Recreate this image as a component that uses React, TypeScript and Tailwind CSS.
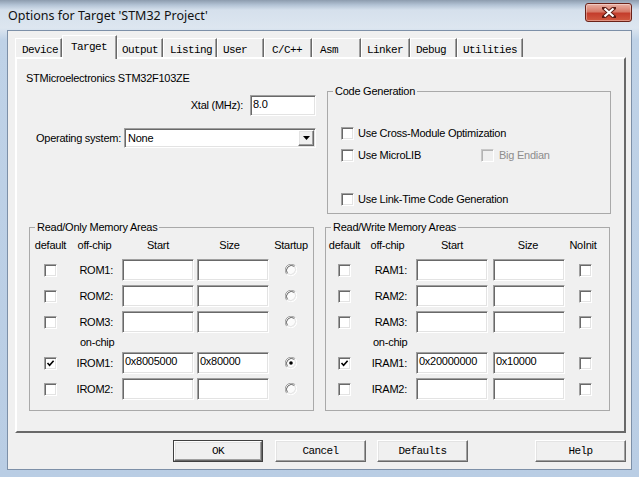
import type { ReactNode } from "react";

const sunken =
  "border border-t-[#a0a0a0] border-l-[#a0a0a0] border-r-white border-b-white shadow-[inset_1px_1px_0_#696969,inset_-1px_-1px_0_#e3e3e3] bg-white";
const raised =
  "border border-t-white border-l-white border-r-[#696969] border-b-[#696969] shadow-[inset_-1px_-1px_0_#a0a0a0,inset_1px_1px_0_#e3e3e3] bg-[#f0f0f0]";

const tabs = [
  { name: "Device", w: "w-[47px]", pl: "pl-[6px]" },
  { name: "Target", w: "w-[55px]", pl: "pl-[8px]", active: true },
  { name: "Output", w: "w-[46px]", pl: "pl-[4px]" },
  { name: "Listing", w: "w-[54px]", pl: "pl-[6px]" },
  { name: "User", w: "w-[47px]", pl: "pl-[5px]" },
  { name: "C/C++", w: "w-[48px]", pl: "pl-[7px]" },
  { name: "Asm", w: "w-[49px]", pl: "pl-[7px]" },
  { name: "Linker", w: "w-[49px]", pl: "pl-[5px]" },
  { name: "Debug", w: "w-[47px]", pl: "pl-[5px]" },
  { name: "Utilities", w: "w-[66px]", pl: "pl-[5px]" },
];

function Check({ checked, disabled }: { checked?: boolean; disabled?: boolean }) {
  return (
    <span
      className={`flex h-[13px] w-[13px] shrink-0 items-center justify-center ${
        disabled
          ? "border border-t-[#c8c8c8] border-l-[#c8c8c8] border-r-white border-b-white shadow-[inset_1px_1px_0_#b4b4b4] bg-[#f0f0f0]"
          : sunken
      }`}
    >
      {checked && (
        <svg width="9" height="9" viewBox="0 0 9 9">
          <path d="M1.5 4 L3.6 6.3 L7.6 1.8" fill="none" stroke="#000" strokeWidth="1.6" />
        </svg>
      )}
    </span>
  );
}

function Radio({ checked }: { checked?: boolean }) {
  return (
    <svg width="12" height="12" viewBox="0 0 12 12">
      <circle cx="6" cy="6" r="5" fill="#fbfbfb" />
      <path d="M1.76 10.24 A6 6 0 0 1 10.24 1.76" fill="none" stroke="#a0a0a0" strokeWidth="1" />
      <path d="M2.5 9.5 A5 5 0 0 1 9.5 2.5" fill="none" stroke="#696969" strokeWidth="1" />
      <path d="M10.24 1.76 A6 6 0 0 1 1.76 10.24" fill="none" stroke="#ffffff" strokeWidth="1" />
      <path d="M9.5 2.5 A5 5 0 0 1 2.5 9.5" fill="none" stroke="#e3e3e3" strokeWidth="1" />
      {checked && <circle cx="6" cy="6" r="1.8" fill="#000" />}
    </svg>
  );
}

function Field({ value, w }: { value?: string; w: string }) {
  return (
    <div className={`${sunken} ${w} h-[22px] pl-[2px] pt-[2px] leading-[13px]`}>
      {value}
    </div>
  );
}

function Group({
  title,
  className,
  children,
}: {
  title: string;
  className: string;
  children: ReactNode;
}) {
  return (
    <fieldset className={`border border-[#a9a9a9] ${className}`}>
      <legend className="ml-[5px] px-[2px] leading-[13px]">{title}</legend>
      {children}
    </fieldset>
  );
}

type Row = { label: string; checked?: boolean; start?: string; size?: string; sel?: boolean };

const romRows: Row[] = [
  { label: "ROM1:" },
  { label: "ROM2:" },
  { label: "ROM3:" },
  { label: "IROM1:", checked: true, start: "0x8005000", size: "0x80000", sel: true },
  { label: "IROM2:" },
];
const ramRows: Row[] = [
  { label: "RAM1:" },
  { label: "RAM2:" },
  { label: "RAM3:" },
  { label: "IRAM1:", checked: true, start: "0x20000000", size: "0x10000" },
  { label: "IRAM2:" },
];

function MemArea({ title, rows, ram }: { title: string; rows: Row[]; ram?: boolean }) {
  const c1 = ram ? "w-[37px]" : "w-[41px]";
  const c2 = ram ? "w-[49px]" : "w-[47px]";
  const c4 = ram ? "pl-[5px]" : "pl-[3px]";
  const c5 = ram ? "w-[40px]" : "w-[44px]";
  const line = (r: Row) => (
    <div key={r.label} className="flex h-[22px] items-center">
      <div className={`${c1} flex justify-center`}>
        <Check checked={r.checked} />
      </div>
      <div className={`${c2} pr-[5px] text-right`}>{r.label}</div>
      <div className="pl-[4px]">
        <Field w="w-[72px]" value={r.start} />
      </div>
      <div className={c4}>
        <Field w="w-[72px]" value={r.size} />
      </div>
      <div className={`${c5} flex justify-center`}>
        {ram ? <Check /> : <Radio checked={r.sel} />}
      </div>
    </div>
  );
  return (
    <Group title={title} className="h-[190px] w-[285px]">
      <div className="mt-[5px] flex h-[13px] items-center leading-[13px]">
        <div className={`${c1} text-center`}>default</div>
        <div className={`${c2} text-center`}>off-chip</div>
        <div className="w-[76px] pl-[4px] text-center">Start</div>
        <div className={`${c4} w-[75px] text-center ${ram ? "" : "pr-[7px]"}`}>Size</div>
        <div className={`${c5} text-center`}>{ram ? "NoInit" : "Startup"}</div>
      </div>
      <div className="mt-[7px] flex flex-col gap-[4px]">
        {rows.slice(0, 3).map(line)}
      </div>
      <div className={`flex h-[19px] items-center ${ram ? "pl-[47px]" : "pl-[50px]"}`}>on-chip</div>
      <div className="flex flex-col gap-[4px]">{rows.slice(3).map(line)}</div>
    </Group>
  );
}

function Btn({ label, def }: { label: string; def?: boolean }) {
  return (
    <div className={def ? "border border-[#404040]" : ""}>
      <div
        className={`${raised} flex ${def ? "h-[20px] w-[88px]" : "h-[22px] w-[91px]"} items-center justify-center font-['Liberation_Mono',monospace] text-[11px] tracking-[-0.6px]`}
      >
        {label}
      </div>
    </div>
  );
}

export default function App() {
  return (
    <div className="flex h-[477px] w-[639px] flex-col overflow-hidden bg-[linear-gradient(180deg,#8d9cae_0px,#b3c3d5_5px,#d5e0ec_10px,#dde6f0_28px,#bfd2e7_40px,#b9cde4_100%)] font-['Liberation_Sans',Arial,sans-serif] text-[11px] tracking-[-0.25px] text-black">
      <div className="flex h-[30px] items-start pl-[8px] pr-[7px]">
        <div className="mt-[8px] font-['Noto_Sans',sans-serif] text-[12.5px] leading-[16px] tracking-normal text-[#111]">
          Options for Target 'STM32 Project'
        </div>
        <div className="ml-auto mt-[3px] flex h-[19px] w-[47px] items-center justify-center rounded-[3px] border border-[#6a2219] bg-[linear-gradient(180deg,#e9b1a5_0%,#d77a68_45%,#c43d2c_55%,#d15a40_100%)] shadow-[inset_0_0_0_1px_rgba(255,255,255,0.35)]">
          <svg width="14" height="11" viewBox="0 0 14 11">
            <path d="M2 1 L12 10 M12 1 L2 10" stroke="#5b1a12" strokeWidth="4" strokeLinecap="square" />
            <path d="M2.5 1.5 L11.5 9.5 M11.5 1.5 L2.5 9.5" stroke="#fff" strokeWidth="2.2" />
          </svg>
        </div>
      </div>

      <div className="mx-[7px] mb-[7px] flex flex-1 flex-col border border-[#7d90a8] bg-[#f0f0f0]">
        {/* tabs */}
        <div className="ml-[7px] mt-[4px] flex h-[22px] items-end font-['Liberation_Mono',monospace] text-[11px] tracking-[-0.6px]">
          {tabs.map((t) =>
            t.active ? (
              <div
                key={t.name}
                className={`relative z-10 -mb-[2px] h-[24px] ${t.w} border-l border-t border-r border-l-white border-t-white border-r-[#696969] bg-[#f0f0f0] pt-[5px] ${t.pl} leading-[12px] shadow-[inset_-1px_0_0_#a0a0a0]`}
              >
                {t.name}
              </div>
            ) : (
              <div
                key={t.name}
                className={`h-[19px] ${t.w} border-l border-t border-r border-l-white border-t-white border-r-[#696969] pt-[5px] ${t.pl} leading-[12px] shadow-[inset_-1px_0_0_#a0a0a0]`}
              >
                {t.name}
              </div>
            ),
          )}
        </div>

        {/* panel */}
        <div className="ml-[7px] mr-[5px] h-[376px] border-2 border-t-white border-l-white border-r-[#696969] border-b-[#696969]">
          <div className="flex">
            <div className="ml-[9px] w-[290px]">
              <div className="mt-[13px] leading-[13px]">STMicroelectronics STM32F103ZE</div>
              <div className="mt-[10px] flex items-center justify-end gap-[7px]">
                <span>Xtal (MHz):</span>
                <div className={`${sunken} h-[21px] w-[66px] pl-[2px] pt-[2px] leading-[13px]`}>8.0</div>
              </div>
              <div className="mt-[12px] flex items-center pl-[10px]">
                <span>Operating system:</span>
                <div className={`${sunken} ml-auto flex h-[20px] w-[192px] items-center pl-[3px]`}>
                  <span className="flex-1">None</span>
                  <div className={`${raised} mr-[1px] flex h-[16px] w-[16px] items-center justify-center`}>
                    <svg width="7" height="4" viewBox="0 0 7 4">
                      <path d="M0 0 H7 L3.5 4 Z" fill="#000" />
                    </svg>
                  </div>
                </div>
              </div>
            </div>
            <Group title="Code Generation" className="ml-[11px] mt-[26px] h-[129px] w-[284px]">
              <div className="mt-[27px] flex h-[16px] items-center gap-[4px] pl-[13px]">
                <Check />
                <span>Use Cross-Module Optimization</span>
              </div>
              <div className="mt-[6px] flex h-[16px] items-center pl-[13px]">
                <div className="flex w-[140px] items-center gap-[4px]">
                  <Check />
                  <span>Use MicroLIB</span>
                </div>
                <div className="flex items-center gap-[5px] text-[#8d8d8d]">
                  <Check disabled />
                  <span>Big Endian</span>
                </div>
              </div>
              <div className="mt-[28px] flex h-[16px] items-center gap-[4px] pl-[13px]">
                <Check />
                <span>Use Link-Time Code Generation</span>
              </div>
            </Group>
          </div>
          <div className="mt-[7px] flex">
            <div className="ml-[12px]">
              <MemArea title="Read/Only Memory Areas" rows={romRows} />
            </div>
            <div className="ml-[11px]">
              <MemArea title="Read/Write Memory Areas" rows={ramRows} ram />
            </div>
          </div>
        </div>

        {/* buttons */}
        <div className="mt-[7px] flex pl-[165px]">
          <Btn label="OK" def />
          <div className="ml-[12px]">
            <Btn label="Cancel" />
          </div>
          <div className="ml-[11px]">
            <Btn label="Defaults" />
          </div>
          <div className="ml-[67px]">
            <Btn label="Help" />
          </div>
        </div>
      </div>
    </div>
  );
}
